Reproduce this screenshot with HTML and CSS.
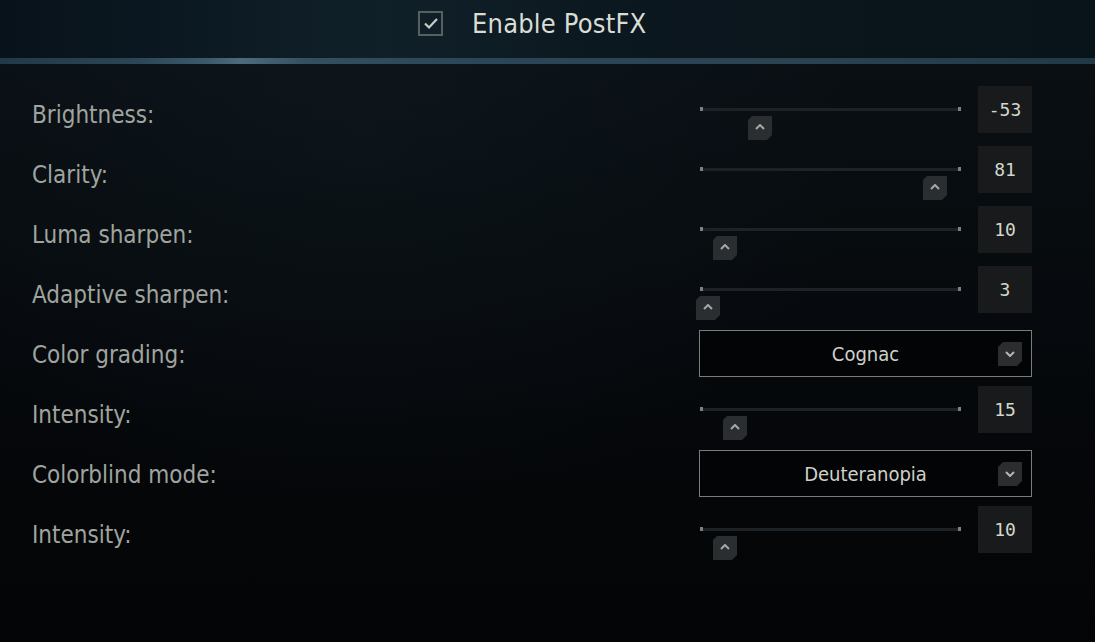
FILE: index.html
```html
<!DOCTYPE html>
<html>
<head>
<meta charset="utf-8">
<link rel="stylesheet" href="styles.css">
</head>
<body>
<div class="page">
  <header class="header">
    <span class="checkbox">
      <svg width="16" height="13" viewBox="0 0 16 13"><path d="M2 6.5 L6 10.5 L14 2" fill="none" stroke="#c9cdc5" stroke-width="2.2"/></svg>
    </span>
    <span class="title">Enable PostFX</span>
  </header>
  <div class="divider"></div>
  <main class="rows">
    <div class="row">
      <div class="label">Brightness:</div>
      <div class="slider">
        <div class="track"><span class="thumb" style="left:48px"><svg width="10" height="6" viewBox="0 0 10 6"><path d="M1 5 L5 1 L9 5" fill="none" stroke="#a6a8a8" stroke-width="2"/></svg></span></div>
        <div class="value">-53</div>
      </div>
    </div>
    <div class="row">
      <div class="label">Clarity:</div>
      <div class="slider">
        <div class="track"><span class="thumb" style="left:223px"><svg width="10" height="6" viewBox="0 0 10 6"><path d="M1 5 L5 1 L9 5" fill="none" stroke="#a6a8a8" stroke-width="2"/></svg></span></div>
        <div class="value">81</div>
      </div>
    </div>
    <div class="row">
      <div class="label">Luma sharpen:</div>
      <div class="slider">
        <div class="track"><span class="thumb" style="left:13px"><svg width="10" height="6" viewBox="0 0 10 6"><path d="M1 5 L5 1 L9 5" fill="none" stroke="#a6a8a8" stroke-width="2"/></svg></span></div>
        <div class="value">10</div>
      </div>
    </div>
    <div class="row">
      <div class="label">Adaptive sharpen:</div>
      <div class="slider">
        <div class="track"><span class="thumb" style="left:-4px"><svg width="10" height="6" viewBox="0 0 10 6"><path d="M1 5 L5 1 L9 5" fill="none" stroke="#a6a8a8" stroke-width="2"/></svg></span></div>
        <div class="value">3</div>
      </div>
    </div>
    <div class="row">
      <div class="label">Color grading:</div>
      <div class="select">
        <span class="select-text">Cognac</span>
        <span class="select-btn"><svg width="10" height="6" viewBox="0 0 10 6"><path d="M1 1 L5 5 L9 1" fill="none" stroke="#b4b6b6" stroke-width="2"/></svg></span>
      </div>
    </div>
    <div class="row">
      <div class="label">Intensity:</div>
      <div class="slider">
        <div class="track"><span class="thumb" style="left:23px"><svg width="10" height="6" viewBox="0 0 10 6"><path d="M1 5 L5 1 L9 5" fill="none" stroke="#a6a8a8" stroke-width="2"/></svg></span></div>
        <div class="value">15</div>
      </div>
    </div>
    <div class="row">
      <div class="label">Colorblind mode:</div>
      <div class="select">
        <span class="select-text">Deuteranopia</span>
        <span class="select-btn"><svg width="10" height="6" viewBox="0 0 10 6"><path d="M1 1 L5 5 L9 1" fill="none" stroke="#b4b6b6" stroke-width="2"/></svg></span>
      </div>
    </div>
    <div class="row">
      <div class="label">Intensity:</div>
      <div class="slider">
        <div class="track"><span class="thumb" style="left:13px"><svg width="10" height="6" viewBox="0 0 10 6"><path d="M1 5 L5 1 L9 5" fill="none" stroke="#a6a8a8" stroke-width="2"/></svg></span></div>
        <div class="value">10</div>
      </div>
    </div>
  </main>
</div>
</body>
</html>
```

FILE: styles.css
```css
* { box-sizing: border-box; }
html, body {
  margin: 0;
  padding: 0;
  width: 1095px;
  height: 642px;
  overflow: hidden;
}
body {
  background: linear-gradient(180deg, #0a1116 0%, #070b0f 50%, #040608 100%);
  font-family: "DejaVu Sans Condensed", "DejaVu Sans", sans-serif;
}
.page {
  width: 1095px;
  height: 642px;
  background:
    radial-gradient(ellipse 500px 400px at 360px 120px, rgba(30, 50, 60, 0.18), rgba(0,0,0,0)),
    linear-gradient(180deg, rgba(0,0,0,0) 0%, rgba(0,0,0,0.3) 100%);
}
.header {
  height: 58px;
  display: flex;
  align-items: flex-start;
  padding-top: 11px;
  padding-left: 418px;
  background: linear-gradient(90deg, #08121a 0%, #0d1c25 25%, #102029 35%, #0c1820 55%, #0a141b 80%, #09131a 100%);
}
.checkbox {
  width: 25px;
  height: 25px;
  border: 2px solid #56605f;
  display: flex;
  align-items: center;
  justify-content: center;
}
.title {
  margin-left: 29px;
  font-size: 27px;
  line-height: 27px;
  color: #d9ddd3;
  letter-spacing: 0.2px;
  margin-top: -1px;
}
.divider {
  height: 6px;
  background: linear-gradient(90deg, #223a47 0%, #2a4553 12%, #3b5b6b 19%, #4c6c7c 22%, #33505f 28%, #2b4656 45%, #2a4452 70%, #223a46 100%);
}
.rows {
  padding: 20px 63px 0 32px;
  display: flex;
  flex-direction: column;
}
.row {
  height: 60px;
  display: flex;
  align-items: flex-start;
  justify-content: space-between;
}
.label {
  font-size: 24px;
  color: #a0a49e;
  line-height: 28px;
  margin-top: 17px;
}
.slider {
  width: 333px;
  display: flex;
  align-items: flex-start;
  padding-top: 2px;
}
.track {
  position: relative;
  width: 261px;
  height: 3px;
  margin-left: 1px;
  margin-top: 22px;
  background: #1c2226;
}
.track::before, .track::after {
  content: "";
  position: absolute;
  top: -1px;
  width: 3px;
  height: 4px;
  background: #7c8080;
}
.track::before { left: 0; }
.track::after { right: 0; }
.thumb {
  position: absolute;
  top: 8px;
  width: 24px;
  height: 24px;
  background: #2b2e30;
  clip-path: polygon(4px 0, 100% 0, 100% calc(100% - 5px), calc(100% - 5px) 100%, 0 100%, 0 4px);
  display: flex;
  align-items: center;
  justify-content: center;
  padding-bottom: 2px;
}
.value {
  margin-left: auto;
  width: 54px;
  height: 47px;
  background: #181a1c;
  color: #d3d7cb;
  font-family: "DejaVu Sans Mono", monospace;
  font-size: 18px;
  display: flex;
  align-items: center;
  justify-content: center;
}
.select {
  position: relative;
  width: 333px;
  height: 47px;
  margin-top: 6px;
  border: 1px solid #7a7c7a;
  background: #030405;
  display: flex;
  align-items: center;
  justify-content: center;
}
.select-text {
  font-size: 20px;
  color: #cfd1c9;
}
.select-btn {
  position: absolute;
  right: 9px;
  top: 11px;
  width: 24px;
  height: 24px;
  background: #2b2d2f;
  clip-path: polygon(5px 0, 100% 0, 100% calc(100% - 5px), calc(100% - 5px) 100%, 0 100%, 0 5px);
  display: flex;
  align-items: center;
  justify-content: center;
}
```
